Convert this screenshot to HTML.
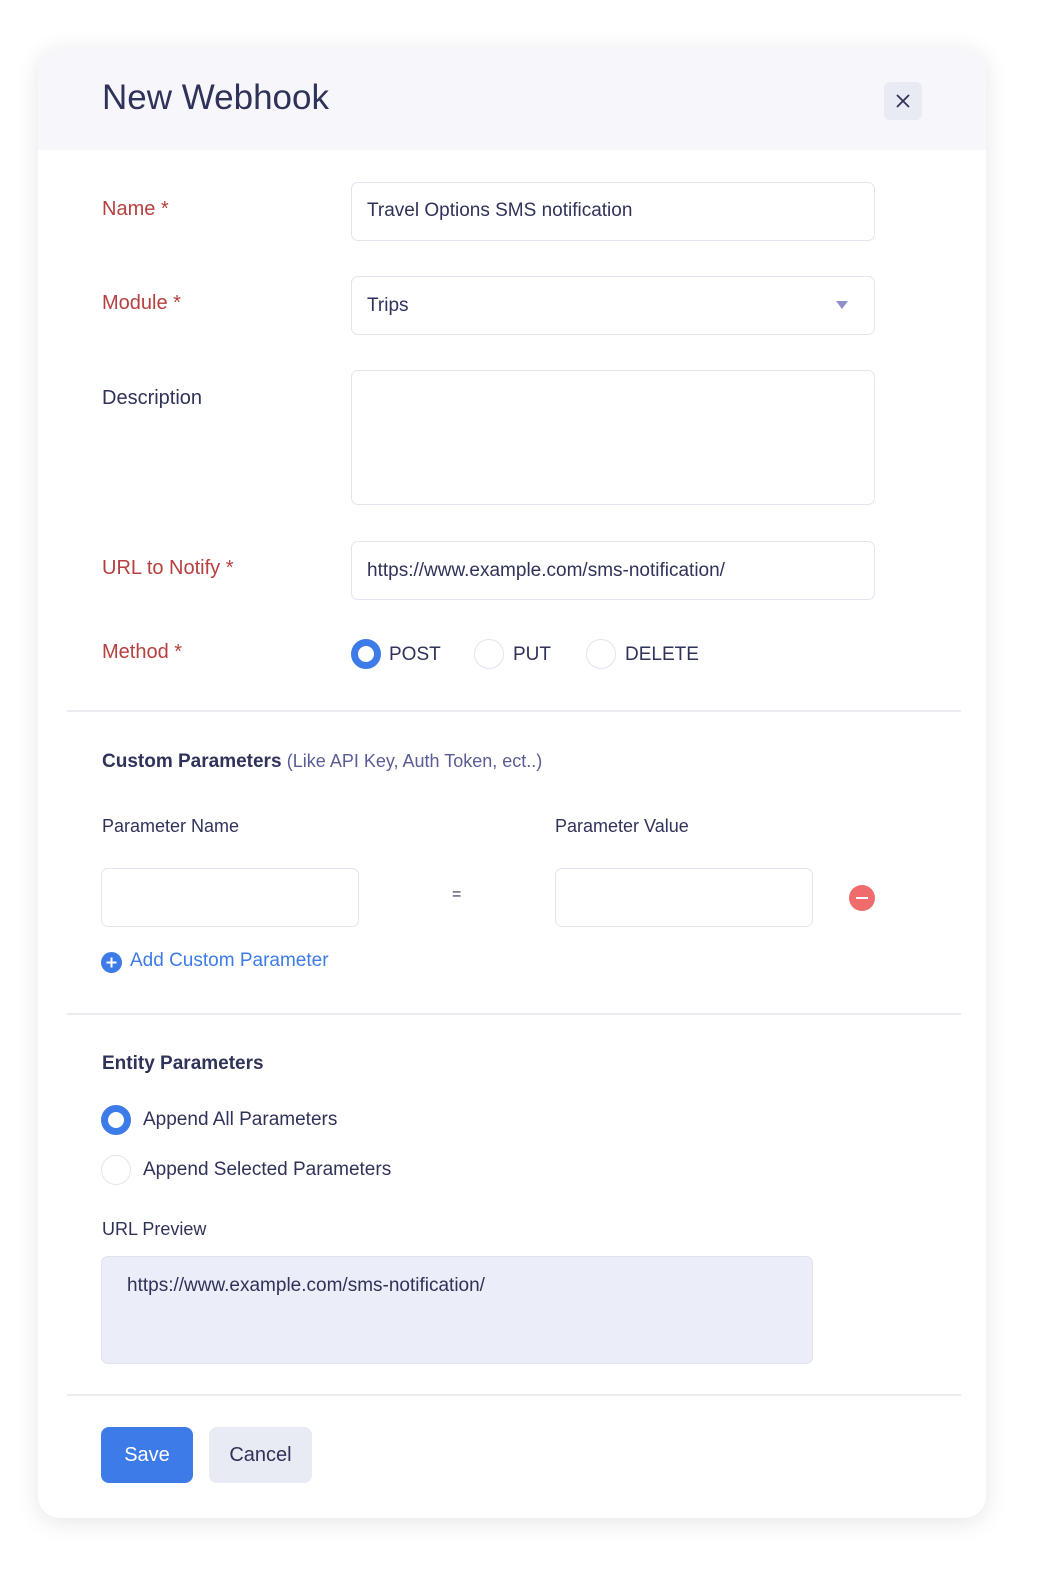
<!DOCTYPE html>
<html><head><meta charset="utf-8"><style>
*{box-sizing:border-box;margin:0;padding:0}
body{width:1037px;height:1588px;background:#fff;font-family:"Liberation Sans",sans-serif;color:#2f3259;position:relative;overflow:hidden}
.card{position:absolute;left:38px;top:48px;width:948px;height:1470px;border-radius:22px;background:#fff;box-shadow:0 4px 24px rgba(0,0,0,.10);overflow:hidden}
.hdr{position:absolute;left:0;top:0;width:100%;height:102px;background:#f7f7fb}
.a{position:absolute}
.t{position:absolute;font-size:20px;white-space:nowrap}
.red{color:#b5403f}
.inp{position:absolute;border:1.5px solid #e3e4ee;border-radius:7px;background:#fff}
.radio{position:absolute;width:30px;height:30px;border-radius:50%;border:1.5px solid #e3e4ee;background:#fff}
.radio.on{border:7px solid #3d7be8}
.hr{position:absolute;left:29px;width:894px;height:2px;background:#ebebf2}
</style></head><body>
<div class="card">
<div class="hdr"></div>
<div class="t" style="left:64px;top:30px;font-size:35px;color:#2f3259">New Webhook</div>
<div class="a" style="left:846px;top:34px;width:38px;height:38px;border-radius:6px;background:#e8eaf4"><svg width="38" height="38"><path d="M13 13L25 25M25 13L13 25" stroke="#2f3259" stroke-width="1.8"/></svg></div>

<div class="t red" style="left:64px;top:150px">Name *</div>
<div class="inp" style="left:313px;top:134px;width:524px;height:59px"></div>
<div class="t" style="left:329px;top:152px;font-size:19px">Travel Options SMS notification</div>

<div class="t red" style="left:64px;top:244px">Module *</div>
<div class="inp" style="left:313px;top:228px;width:524px;height:59px"></div>
<div class="t" style="left:329px;top:247px;font-size:19px">Trips</div>
<div class="a" style="left:798px;top:253px;width:0;height:0;border-left:6px solid transparent;border-right:6px solid transparent;border-top:8px solid #8e90c8"></div>

<div class="t" style="left:64px;top:339px">Description</div>
<div class="inp" style="left:313px;top:322px;width:524px;height:135px"></div>

<div class="t red" style="left:64px;top:509px">URL to Notify *</div>
<div class="inp" style="left:313px;top:493px;width:524px;height:59px"></div>
<div class="t" style="left:329px;top:512px;font-size:19px">https://www.example.com/sms-notification/</div>

<div class="t red" style="left:64px;top:593px">Method *</div>
<div class="radio on" style="left:313px;top:591px"></div><div class="t" style="left:351px;top:596px;font-size:19px">POST</div>
<div class="radio" style="left:436px;top:591px"></div><div class="t" style="left:475px;top:596px;font-size:19px">PUT</div>
<div class="radio" style="left:548px;top:591px"></div><div class="t" style="left:587px;top:596px;font-size:19px">DELETE</div>

<div class="hr" style="top:662px"></div>

<div class="t" style="left:64px;top:703px;font-weight:bold;font-size:19px">Custom Parameters <span style="font-weight:normal;color:#5a5d94;font-size:18px">(Like API Key, Auth Token, ect..)</span></div>
<div class="t" style="left:64px;top:768px;font-size:18px">Parameter Name</div>
<div class="t" style="left:517px;top:768px;font-size:18px">Parameter Value</div>
<div class="inp" style="left:63px;top:820px;width:258px;height:59px"></div>
<div class="t" style="left:414px;top:838px;font-size:16px">=</div>
<div class="inp" style="left:517px;top:820px;width:258px;height:59px"></div>
<div class="a" style="left:811px;top:837px;width:26px;height:26px;border-radius:50%;background:#f06b6b"><div class="a" style="left:7px;top:12px;width:12px;height:2px;background:#fff"></div></div>
<div class="a" style="left:63px;top:904px;width:21px;height:21px;border-radius:50%;background:#3d7be8"><svg width="21" height="21"><path d="M10.5 5.5v10M5.5 10.5h10" stroke="#fff" stroke-width="2"/></svg></div>
<div class="t" style="left:92px;top:902px;color:#3d7be8;font-size:19px">Add Custom Parameter</div>

<div class="hr" style="top:965px"></div>

<div class="t" style="left:64px;top:1005px;font-weight:bold;font-size:19px">Entity Parameters</div>
<div class="radio on" style="left:63px;top:1057px"></div><div class="t" style="left:105px;top:1061px;font-size:19px">Append All Parameters</div>
<div class="radio" style="left:63px;top:1107px"></div><div class="t" style="left:105px;top:1111px;font-size:19px">Append Selected Parameters</div>
<div class="t" style="left:64px;top:1171px;font-size:18px">URL Preview</div>
<div class="a" style="left:63px;top:1208px;width:712px;height:108px;border-radius:7px;background:#ebedf8;border:1.5px solid #e0e2ef"></div>
<div class="t" style="left:89px;top:1227px;font-size:19px">https://www.example.com/sms-notification/</div>

<div class="hr" style="top:1346px"></div>

<div class="a" style="left:63px;top:1379px;width:92px;height:56px;border-radius:8px;background:#3d7be8;color:#fff;font-size:20px;text-align:center;line-height:56px">Save</div>
<div class="a" style="left:171px;top:1379px;width:103px;height:56px;border-radius:8px;background:#e8eaf4;font-size:20px;text-align:center;line-height:56px">Cancel</div>
</div>
</body></html>
